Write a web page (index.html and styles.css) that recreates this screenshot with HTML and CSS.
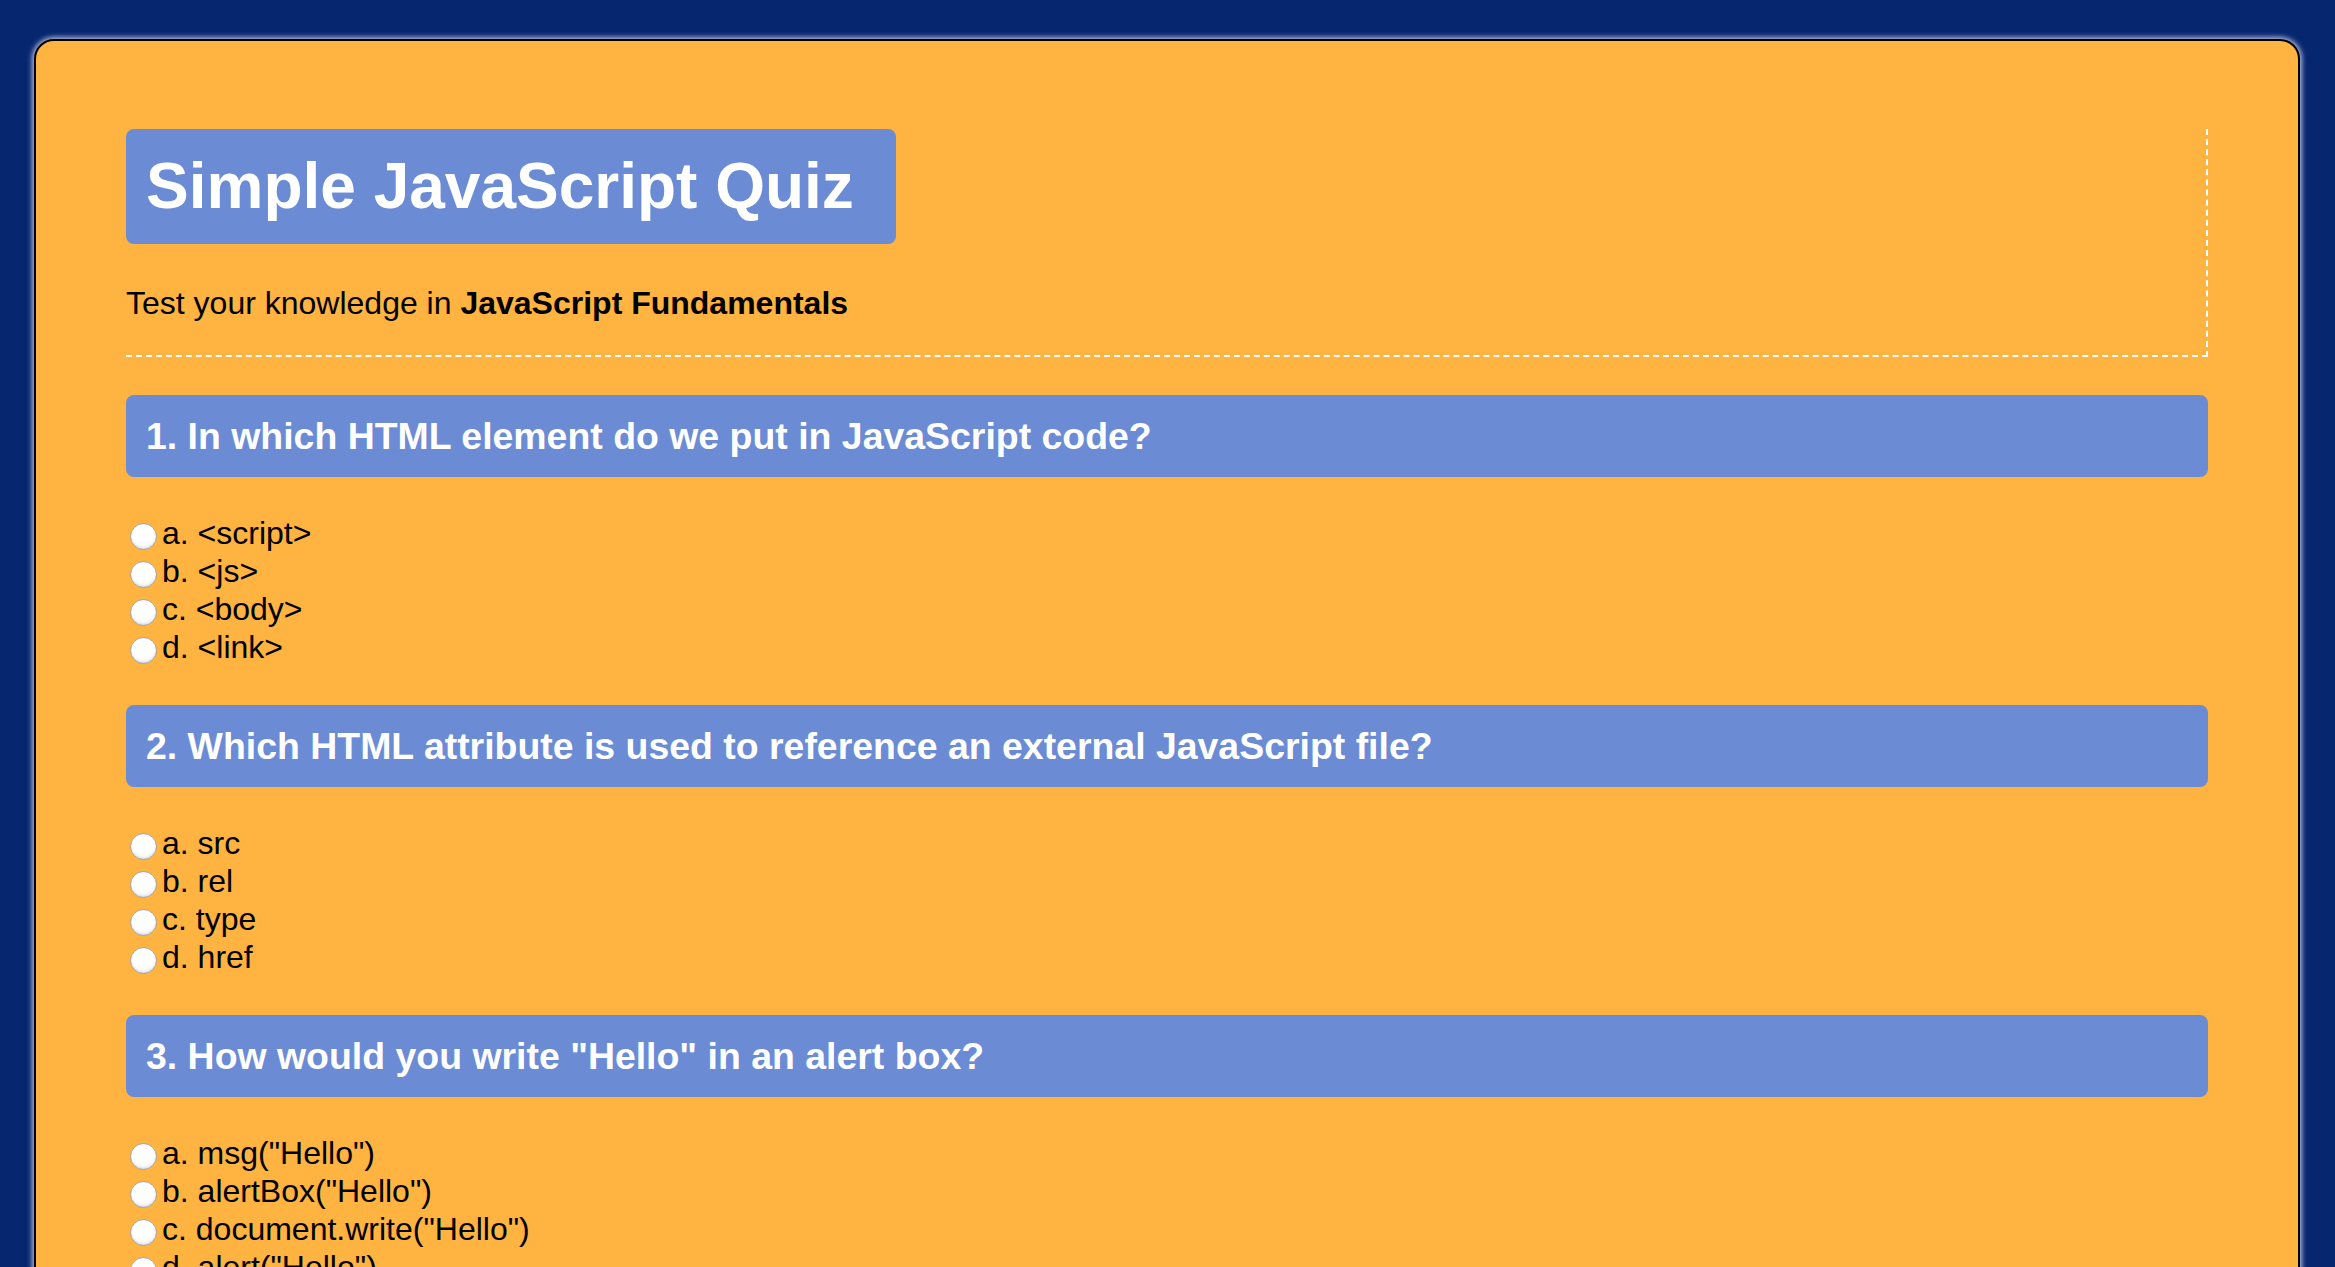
FILE: index.html
```html
<!DOCTYPE html>
<html lang="en">
<head>
<meta charset="utf-8">
<title>Simple JavaScript Quiz</title>
<link rel="stylesheet" href="styles.css">
</head>
<body>
<div class="card">
  <div class="header">
    <h1 class="title">Simple JavaScript Quiz</h1>
    <p class="subtitle">Test your knowledge in <strong>JavaScript Fundamentals</strong></p>
  </div>

  <form class="quiz">
    <section class="question">
      <h3 class="q-title">1. In which HTML element do we put in JavaScript code?</h3>
      <div class="options">
        <label class="option"><input type="radio" name="q1" value="a">a. &lt;script&gt;</label>
        <label class="option"><input type="radio" name="q1" value="b">b. &lt;js&gt;</label>
        <label class="option"><input type="radio" name="q1" value="c">c. &lt;body&gt;</label>
        <label class="option"><input type="radio" name="q1" value="d">d. &lt;link&gt;</label>
      </div>
    </section>

    <section class="question">
      <h3 class="q-title">2. Which HTML attribute is used to reference an external JavaScript file?</h3>
      <div class="options">
        <label class="option"><input type="radio" name="q2" value="a">a. src</label>
        <label class="option"><input type="radio" name="q2" value="b">b. rel</label>
        <label class="option"><input type="radio" name="q2" value="c">c. type</label>
        <label class="option"><input type="radio" name="q2" value="d">d. href</label>
      </div>
    </section>

    <section class="question">
      <h3 class="q-title">3. How would you write "Hello" in an alert box?</h3>
      <div class="options">
        <label class="option"><input type="radio" name="q3" value="a">a. msg("Hello")</label>
        <label class="option"><input type="radio" name="q3" value="b">b. alertBox("Hello")</label>
        <label class="option"><input type="radio" name="q3" value="c">c. document.write("Hello")</label>
        <label class="option"><input type="radio" name="q3" value="d">d. alert("Hello")</label>
      </div>
    </section>
  </form>
</div>
</body>
</html>
```

FILE: styles.css
```css
html, body {
  margin: 0;
  padding: 0;
}

body {
  background: #072670;
  font-family: "Liberation Sans", Helvetica, Arial, sans-serif;
  color: #000;
  padding: 39px 35px 0 34px;
}

.card {
  background: #ffb340;
  border: 2px solid #000;
  border-radius: 20px;
  box-shadow: 0 0 5px 2px rgba(230, 235, 255, 0.75);
  padding: 88px 90px 60px 90px;
}

.header {
  border-right: 2px dashed #fff;
  border-bottom: 2px dashed #fff;
  margin-bottom: 38px;
}

.title {
  display: inline-block;
  margin: 0;
  background: #6b8cd5;
  color: #fff;
  font-size: 64px;
  font-weight: bold;
  line-height: 75px;
  padding: 20px 42px 20px 20px;
  border-radius: 8px;
}

.subtitle {
  margin: 41px 0 0 0;
  padding-bottom: 33px;
  font-size: 32px;
  line-height: 37px;
}

.quiz {
  margin: 0;
}

.question {
  margin-bottom: 39px;
}

.q-title {
  margin: 0 0 37px 0;
  background: #6b8cd5;
  color: #fff;
  font-size: 37.44px;
  font-weight: bold;
  line-height: 42px;
  padding: 20px;
  border-radius: 8px;
}

.options {
  display: flex;
  flex-direction: column;
}

.option {
  display: flex;
  align-items: center;
  font-size: 32px;
  line-height: 38px;
}

.option input {
  appearance: none;
  -webkit-appearance: none;
  width: 27px;
  height: 27px;
  margin: 6px 5px 0 4px;
  border-radius: 50%;
  border: 1.5px solid #a6a6a6;
  background: radial-gradient(circle at 50% 30%, #ffffff 0%, #ffffff 55%, #e6e6e6 100%);
  box-shadow: inset 0 -1px 2px rgba(0, 0, 0, 0.1);
  box-sizing: border-box;
  flex: none;
}
```
